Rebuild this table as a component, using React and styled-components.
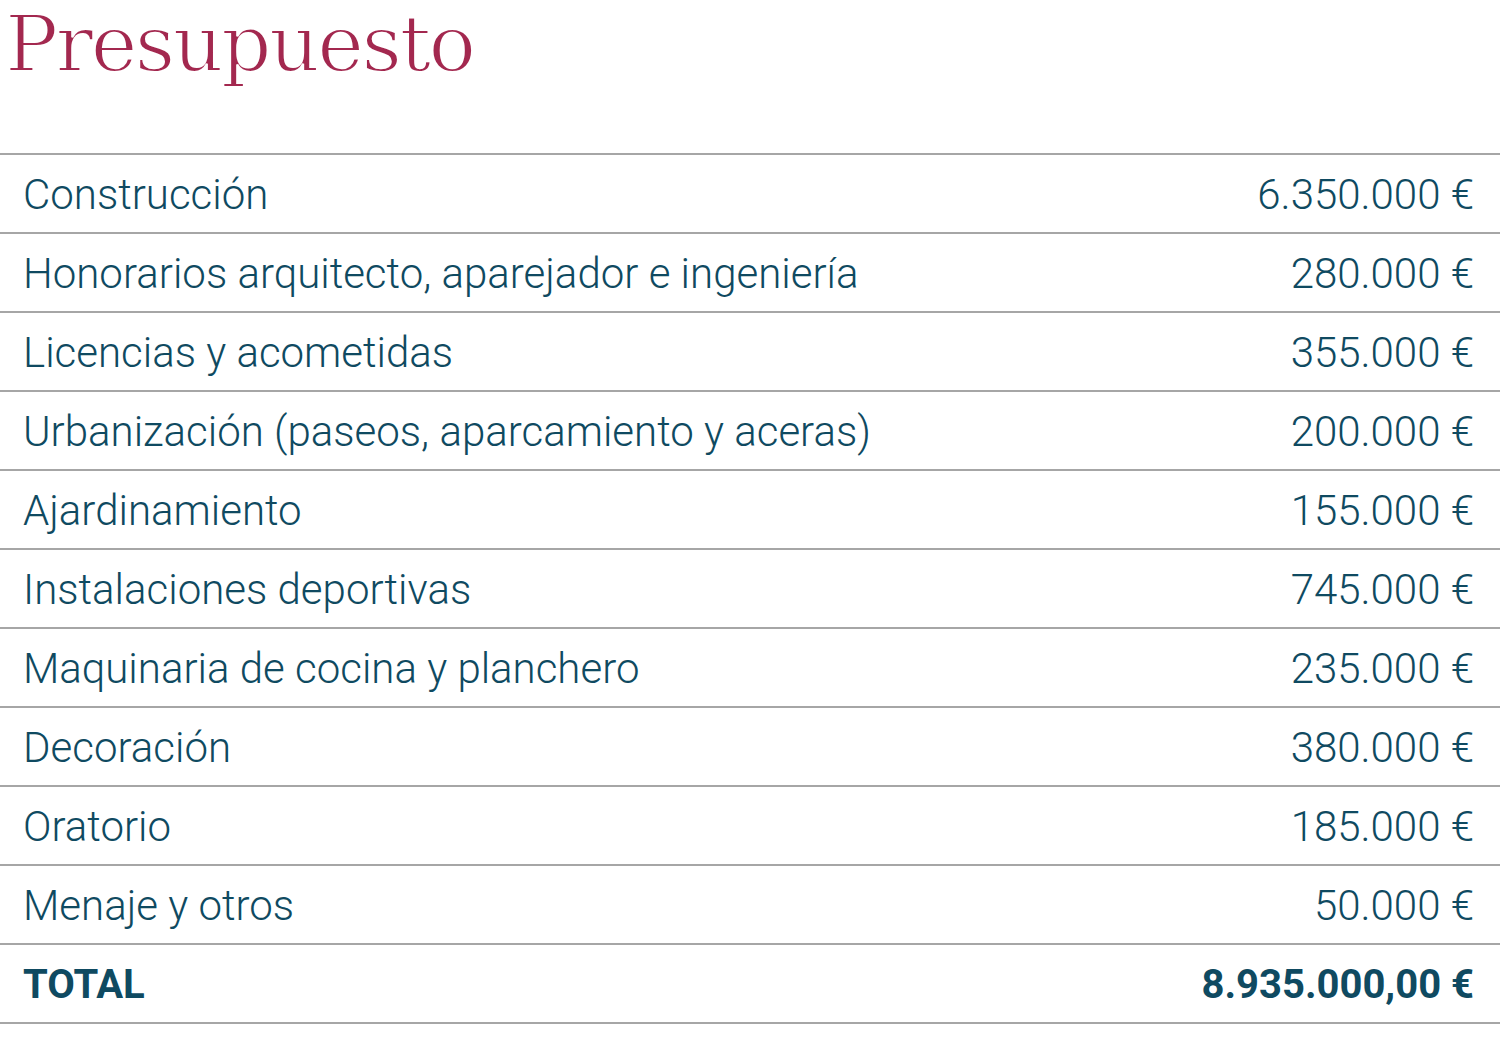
import React from "react";
import styled, { createGlobalStyle } from "styled-components";

const GlobalStyle = createGlobalStyle`
  html, body {
    margin: 0;
    padding: 0;
    background: #ffffff;
  }
`;

const Page = styled.div`
  width: 1500px;
`;

const Title = styled.h1`
  margin: 0;
  padding: 0 0 0 5px;
  height: 153px;
  font-family: "DejaVu Serif", "Liberation Serif", serif;
  font-weight: 400;
  font-size: 79px;
  line-height: 89px;
  letter-spacing: -2.6px;
  color: #a3284f;
  -webkit-text-stroke: 2px #ffffff;
`;

const Table = styled.div`
  border-top: 2px solid #a6a6a6;
`;

const Row = styled.div`
  display: flex;
  justify-content: space-between;
  align-items: center;
  box-sizing: border-box;
  height: 79px;
  padding: 1px 26px 0 23px;
  border-bottom: 2px solid #a6a6a6;
  font-family: Roboto, "Liberation Sans", sans-serif;
  font-weight: ${(props) => (props.total ? 700 : 300)};
  font-size: ${(props) => (props.total ? "40px" : "42px")};
  color: #0f4a61;
`;

const items = [
  ["Construcción", "6.350.000 €"],
  ["Honorarios arquitecto, aparejador e ingeniería", "280.000 €"],
  ["Licencias y acometidas", "355.000 €"],
  ["Urbanización (paseos, aparcamiento y aceras)", "200.000 €"],
  ["Ajardinamiento", "155.000 €"],
  ["Instalaciones deportivas", "745.000 €"],
  ["Maquinaria de cocina y planchero", "235.000 €"],
  ["Decoración", "380.000 €"],
  ["Oratorio", "185.000 €"],
  ["Menaje y otros", "50.000 €"],
];

export default function App() {
  return (
    <Page>
      <GlobalStyle />
      <Title>Presupuesto</Title>
      <Table>
        {items.map(([label, amount]) => (
          <Row key={label}>
            <span>{label}</span>
            <span>{amount}</span>
          </Row>
        ))}
        <Row total>
          <span>TOTAL</span>
          <span>8.935.000,00 €</span>
        </Row>
      </Table>
    </Page>
  );
}
